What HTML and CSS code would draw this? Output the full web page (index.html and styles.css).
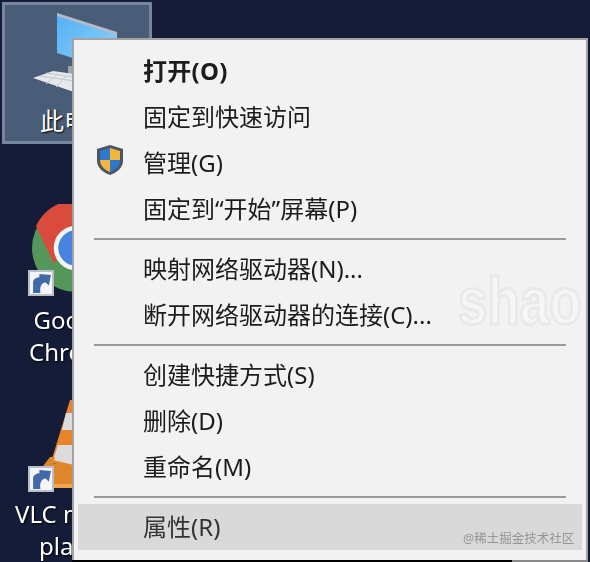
FILE: index.html
```html
<!DOCTYPE html>
<html lang="zh-CN">
  <head>
    <meta charset="UTF-8" />
    <meta name="viewport" content="width=device-width, initial-scale=1.0" />
    <title>此电脑</title>
    <link rel="stylesheet" href="styles.css">
  </head>
  <body>
    <div class="desktop">
      <div class="desktop-icon selected icon-pc">
        <svg class="art" width="148" height="100" viewBox="2 2 148 100">
          <defs>
            <linearGradient id="screen" x1="0" y1="0" x2="1" y2="1">
              <stop offset="0" stop-color="#55b0f4" />
              <stop offset="1" stop-color="#93d3fc" />
            </linearGradient>
          </defs>
          <polygon points="57,14 117,33 117,72 57,53" fill="url(#screen)" />
          <polygon points="57,13 117,32 117,35 57,16" fill="#b4bcc8" />
          <rect x="68" y="66" width="6" height="8" fill="#9aa3ae" />
          <polygon points="33,78 53,71 74,74 74,92" fill="#e6e9eb" />
          <path d="M40 76 L74 81 M46 73 L74 77 M46 84 L58 74 M56 87 L66 76" stroke="#c3c8cd" stroke-width="1" fill="none" />
        </svg>
        <div class="label">此电脑</div>
      </div>

      <div class="desktop-icon icon-chrome">
        <svg class="art" width="90" height="90" viewBox="0 0 90 90">
          <circle cx="44" cy="44" r="44" fill="#55975a" />
          <path d="M4 22 A44 44 0 0 1 84 22 L44 22 L22 60 Z" fill="#d94c3d" />
          <circle cx="44" cy="44" r="20" fill="#4a82e2" stroke="#f4f6f8" stroke-width="4.5" />
        </svg>
        <div class="shortcut">
          <svg width="21" height="21" viewBox="0 0 20 20">
            <path d="M2 19 L2 9 C2 6 5 4 8 4 L8 1 L19 2 L17 12 L14 9 C10 9 8 13 9 19 Z" fill="#3f69a8" />
          </svg>
        </div>
        <div class="label">Google<br />Chrome</div>
      </div>

      <div class="desktop-icon icon-vlc">
        <svg class="art" width="50" height="92" viewBox="24 398 50 92">
          <polygon points="70,400 74,400 74,470 51,462" fill="#e8842a" />
          <polygon points="66,413 74,413 74,430 62,430" fill="#dcdcdc" />
          <polygon points="58,445 74,445 74,465 53,460" fill="#dcdcdc" />
          <polygon points="50,457 55,457 53,463 74,468 74,488 40,488 40,470" fill="#de862c" />
          <rect x="40" y="484" width="34" height="4" fill="#f2a54c" />
        </svg>
        <div class="shortcut">
          <svg width="21" height="21" viewBox="0 0 20 20">
            <path d="M2 19 L2 9 C2 6 5 4 8 4 L8 1 L19 2 L17 12 L14 9 C10 9 8 13 9 19 Z" fill="#3f69a8" />
          </svg>
        </div>
        <div class="label">VLC media<br />player</div>
      </div>

      <div class="menu">
        <div class="menu-item bold">打开(O)</div>
        <div class="menu-item">固定到快速访问</div>
        <div class="menu-item">
          <svg class="shield" width="30" height="32" viewBox="0 0 30 32">
            <path d="M15 1 L28 5 V17 C28 24 21 29 15 31 C9 29 2 24 2 17 V5 Z" fill="#4b5563" />
            <path d="M15 4 V16 H5 V7 Z" fill="#2f78cf" />
            <path d="M15 4 L25 7 V16 H15 Z" fill="#f2b63c" />
            <path d="M5 16 H15 V28 C10 26 5 22 5 16 Z" fill="#f2b63c" />
            <path d="M15 16 H25 C25 22 20 26 15 28 Z" fill="#2f78cf" />
          </svg>
          管理(G)
        </div>
        <div class="menu-item">固定到“开始”屏幕(P)</div>
        <div class="separator"></div>
        <div class="menu-item">映射网络驱动器(N)...</div>
        <div class="menu-item">断开网络驱动器的连接(C)...</div>
        <div class="separator"></div>
        <div class="menu-item">创建快捷方式(S)</div>
        <div class="menu-item">删除(D)</div>
        <div class="menu-item">重命名(M)</div>
        <div class="separator"></div>
        <div class="menu-item hover">属性(R)</div>
      </div>

      <div class="mark-name">shao</div>
      <div class="mark-site">@稀土掘金技术社区</div>
    </div>
  </body>
</html>
```

FILE: styles.css
```css
* {
  margin: 0;
  padding: 0;
  box-sizing: border-box;
}

body {
  width: 590px;
  height: 562px;
  overflow: hidden;
  background: #141c38;
  font-family: "Noto Sans", "Noto Sans CJK SC", sans-serif;
}

.desktop {
  position: relative;
  width: 590px;
  height: 562px;
  overflow: hidden;
  filter: blur(0.6px);
}

.desktop-icon {
  position: absolute;
}

.desktop-icon .art {
  position: absolute;
}

.label {
  position: absolute;
  color: #fff;
  font-size: 24px;
  line-height: 32px;
  text-align: center;
  white-space: nowrap;
  text-shadow: 1px 1px 2px #000;
}

.icon-pc {
  left: 2px;
  top: 2px;
  width: 150px;
  height: 142px;
}

.selected {
  background: #4a5d78;
  border: 3px solid #75869e;
}

.icon-pc .art {
  left: -3px;
  top: -3px;
}

.icon-pc .label {
  left: 35px;
  top: 100px;
}

.icon-chrome {
  left: 24px;
  top: 204px;
  width: 90px;
  height: 165px;
}

.icon-chrome .art {
  left: 8px;
  top: 0;
}

.icon-chrome .label {
  left: 4px;
  top: 100px;
  width: 92px;
}

.icon-vlc {
  left: 0;
  top: 398px;
  width: 120px;
  height: 164px;
}

.icon-vlc .art {
  left: 24px;
  top: 0;
}

.icon-vlc .label {
  left: 15px;
  top: 100px;
}

.shortcut {
  position: absolute;
  display: flex;
  align-items: center;
  justify-content: center;
  width: 26px;
  height: 26px;
  background: #f4f5f7;
  border: 2px solid #b9bec8;
}

.icon-chrome .shortcut {
  left: 4px;
  top: 66px;
}

.icon-vlc .shortcut {
  left: 28px;
  top: 68px;
}

.menu {
  position: absolute;
  left: 72px;
  top: 38px;
  width: 516px;
  height: 524px;
  padding: 8px 4px 0;
  display: flex;
  flex-direction: column;
  background: #f2f2f2;
  border: 2px solid #a3a3a3;
  border-bottom: none;
}

/* bottom edge: black under the left part, grey under the right */
.menu::after {
  content: "";
  position: absolute;
  left: -2px;
  right: -2px;
  bottom: 0;
  height: 2px;
  background: linear-gradient(to right, #000 440px, #8a8a8a 440px);
}

.menu-item {
  position: relative;
  flex: none;
  height: 46px;
  padding-left: 65px;
  font-size: 24px;
  line-height: 46px;
  color: #1c1c1c;
  white-space: nowrap;
}

.bold {
  font-weight: 700;
  letter-spacing: 0.3px;
}

.hover {
  background: #d9d9d9;
  color: #333;
}

.separator {
  flex: none;
  height: 2px;
  margin: 6px 16px;
  background: #9a9a9a;
}

.shield {
  position: absolute;
  left: 17px;
  top: 4px;
}

.mark-name {
  position: absolute;
  left: 458px;
  top: 265px;
  font-family: "Liberation Sans", sans-serif;
  font-size: 67px;
  line-height: 72px;
  font-weight: 700;
  color: #f6f6f6;
  -webkit-text-stroke: 3px #e9e9e9;
  transform: scaleX(0.79);
  transform-origin: left top;
}

.mark-site {
  position: absolute;
  left: 463px;
  top: 530px;
  font-size: 12.5px;
  line-height: 18px;
  color: #959595;
}
```
